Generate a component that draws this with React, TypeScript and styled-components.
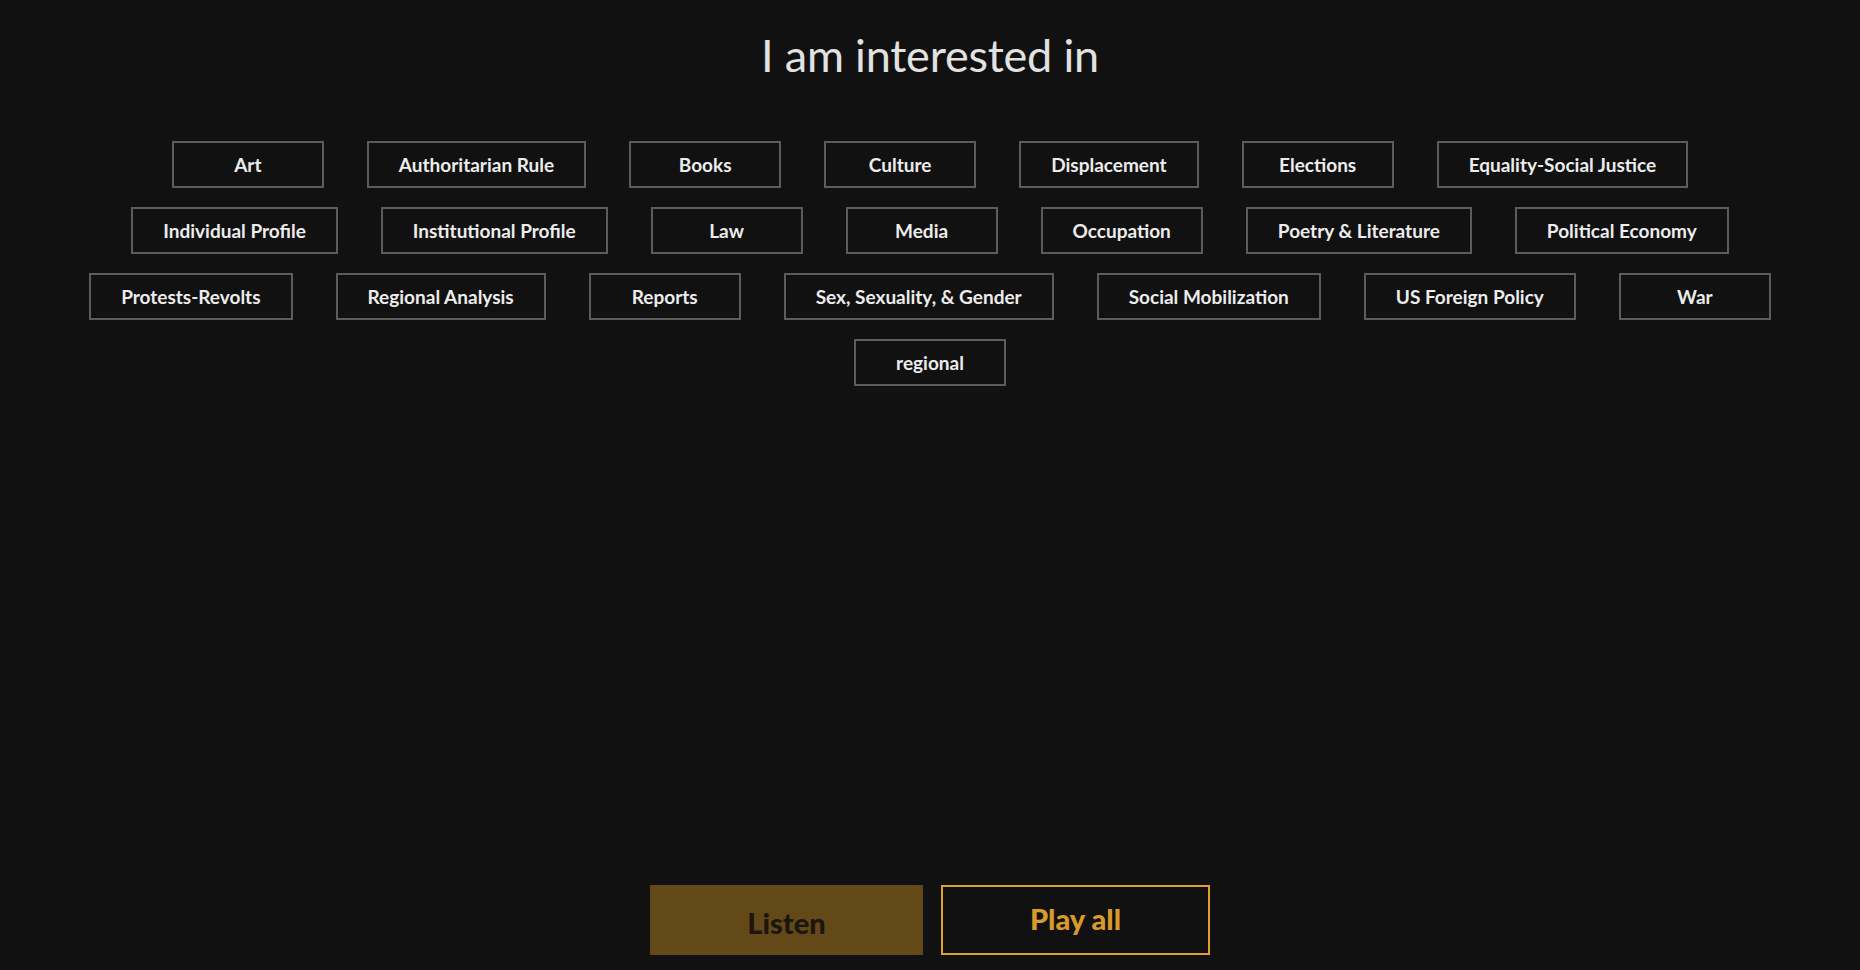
import React from "react";
import styled, { createGlobalStyle } from "styled-components";

const GlobalStyle = createGlobalStyle`
  html, body {
    margin: 0;
    padding: 0;
    background: #111111;
  }
  body {
    font-family: "Lato", "Open Sans", sans-serif;
  }
`;

const topics = [
  "Art",
  "Authoritarian Rule",
  "Books",
  "Culture",
  "Displacement",
  "Elections",
  "Equality-Social Justice",
  "Individual Profile",
  "Institutional Profile",
  "Law",
  "Media",
  "Occupation",
  "Poetry & Literature",
  "Political Economy",
  "Protests-Revolts",
  "Regional Analysis",
  "Reports",
  "Sex, Sexuality, & Gender",
  "Social Mobilization",
  "US Foreign Policy",
  "War",
  "regional",
];

const Page = styled.div`
  height: 970px;
  display: flex;
  flex-direction: column;
  align-items: center;
  box-sizing: border-box;
`;

const Title = styled.h1`
  margin: 27px 0 0;
  font-family: "Lato", sans-serif;
  font-weight: 400;
  font-size: 45px;
  line-height: 56px;
  color: #e2e2e2;
  letter-spacing: -0.2px;
`;

const TagList = styled.div`
  width: 1760px;
  margin-top: 58px;
  display: flex;
  flex-wrap: wrap;
  justify-content: center;
  row-gap: 19px;
`;

const Tag = styled.button`
  box-sizing: border-box;
  min-width: 152px;
  height: 47px;
  margin: 0 21.5px;
  padding: 0 30px;
  background: transparent;
  border: 2px solid #5c5c5c;
  color: #ececec;
  font-family: "Lato", sans-serif;
  font-weight: 700;
  font-size: 19px;
  cursor: pointer;
`;

const Footer = styled.div`
  margin-top: auto;
  margin-bottom: 15px;
  display: flex;
  gap: 18px;
`;

const ActionButton = styled.button<{ $variant: "filled" | "outline" }>`
  box-sizing: border-box;
  width: ${(p) => (p.$variant === "filled" ? "273px" : "269px")};
  height: 70px;
  font-family: "Lato", sans-serif;
  font-weight: 900;
  font-size: 29px;
  cursor: pointer;
  background: ${(p) => (p.$variant === "filled" ? "#634818" : "transparent")};
  color: ${(p) => (p.$variant === "filled" ? "#1c160c" : "#d99a2b")};
  border: ${(p) => (p.$variant === "filled" ? "none" : "2px solid #e0a030")};
  padding: ${(p) => (p.$variant === "filled" ? "4px 0 0" : "0 0 4px")};
`;

export default function App() {
  return (
    <>
      <GlobalStyle />
      <Page>
        <Title>I am interested in</Title>
        <TagList>
          {topics.map((t) => (
            <Tag key={t}>{t}</Tag>
          ))}
        </TagList>
        <Footer>
          <ActionButton $variant="filled">Listen</ActionButton>
          <ActionButton $variant="outline">Play all</ActionButton>
        </Footer>
      </Page>
    </>
  );
}
